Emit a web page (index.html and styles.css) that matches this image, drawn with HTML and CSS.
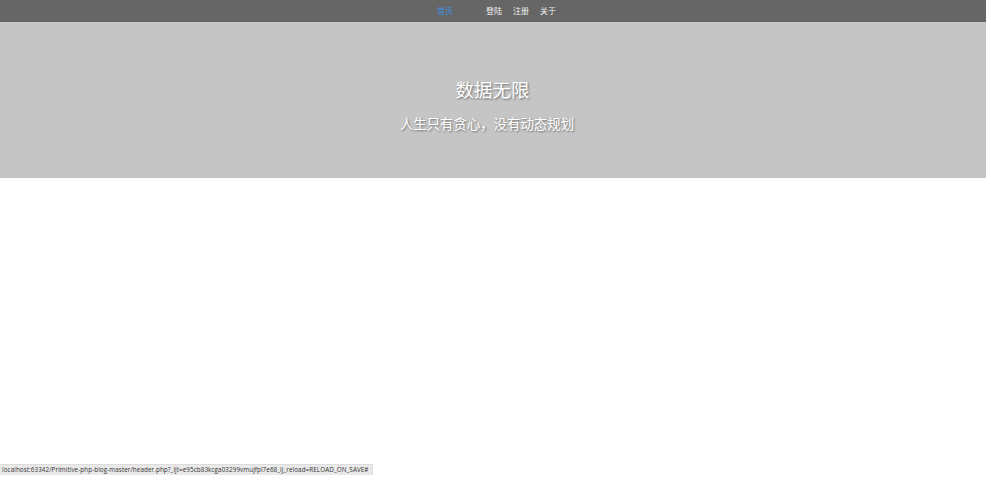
FILE: index.html
```html
<!DOCTYPE html>
<html lang="zh">
<head>
<meta charset="utf-8">
<title>数据无限</title>
<link rel="stylesheet" href="styles.css">
</head>
<body>
<div class="page">
  <nav class="nav">
    <ul class="nav-list">
      <li class="nav-item active">首页</li>
      <li class="nav-item first-right">登陆</li>
      <li class="nav-item">注册</li>
      <li class="nav-item">关于</li>
    </ul>
  </nav>
  <header class="hero">
    <h1 class="hero-title">数据无限</h1>
    <p class="hero-sub">人生只有贪心，没有动态规划</p>
  </header>
</div>
<div class="status">localhost:63342/Primitive-php-blog-master/header.php?_ijt=e95cb83kcga03299vmujfpi7e68_ij_reload=RELOAD_ON_SAVE#</div>
</body>
</html>
```
FILE: styles.css
```css
html, body {
  margin: 0;
  padding: 0;
  background: #ffffff;
  font-family: "Noto Sans CJK SC", "Noto Sans", sans-serif;
}
.page {
  width: 986px;
}
.nav {
  height: 22px;
  background: #666666;
  display: flex;
  align-items: center;
}
.nav-list {
  list-style: none;
  margin: 0;
  padding: 0 0 0 437px;
  display: flex;
  gap: 11px;
}
.nav-item {
  font-size: 8px;
  line-height: 22px;
  color: #f2f2f2;
}
.nav-item.active {
  color: #3d8fe0;
}
.nav-item.first-right {
  margin-left: 22px;
}
.hero {
  height: 156px;
  background: #c5c5c5;
  display: flex;
  flex-direction: column;
  align-items: center;
  box-sizing: border-box;
  padding-top: 55px;
}
.hero-title {
  margin: 0 0 0 -1px;
  font-size: 18.5px;
  font-weight: normal;
  line-height: 24px;
  color: #ffffff;
  text-shadow: 1px 1px 2px rgba(0,0,0,0.45);
}
.hero-sub {
  margin: 13px 12px 0 0;
  font-size: 13.4px;
  line-height: 18px;
  color: #ffffff;
  text-shadow: 1px 1px 2px rgba(0,0,0,0.45);
}
.status {
  position: absolute;
  left: 0;
  top: 464px;
  height: 11px;
  background: #e9e9e9;
  border-top: 1px solid #dcdcdc;
  border-right: 1px solid #dcdcdc;
  box-sizing: border-box;
  font-family: "Open Sans", "Liberation Sans", sans-serif;
  font-size: 6.3px;
  letter-spacing: 0.08px;
  line-height: 10px;
  color: #333;
  padding: 0 3px 0 2px;
  white-space: nowrap;
}
```
